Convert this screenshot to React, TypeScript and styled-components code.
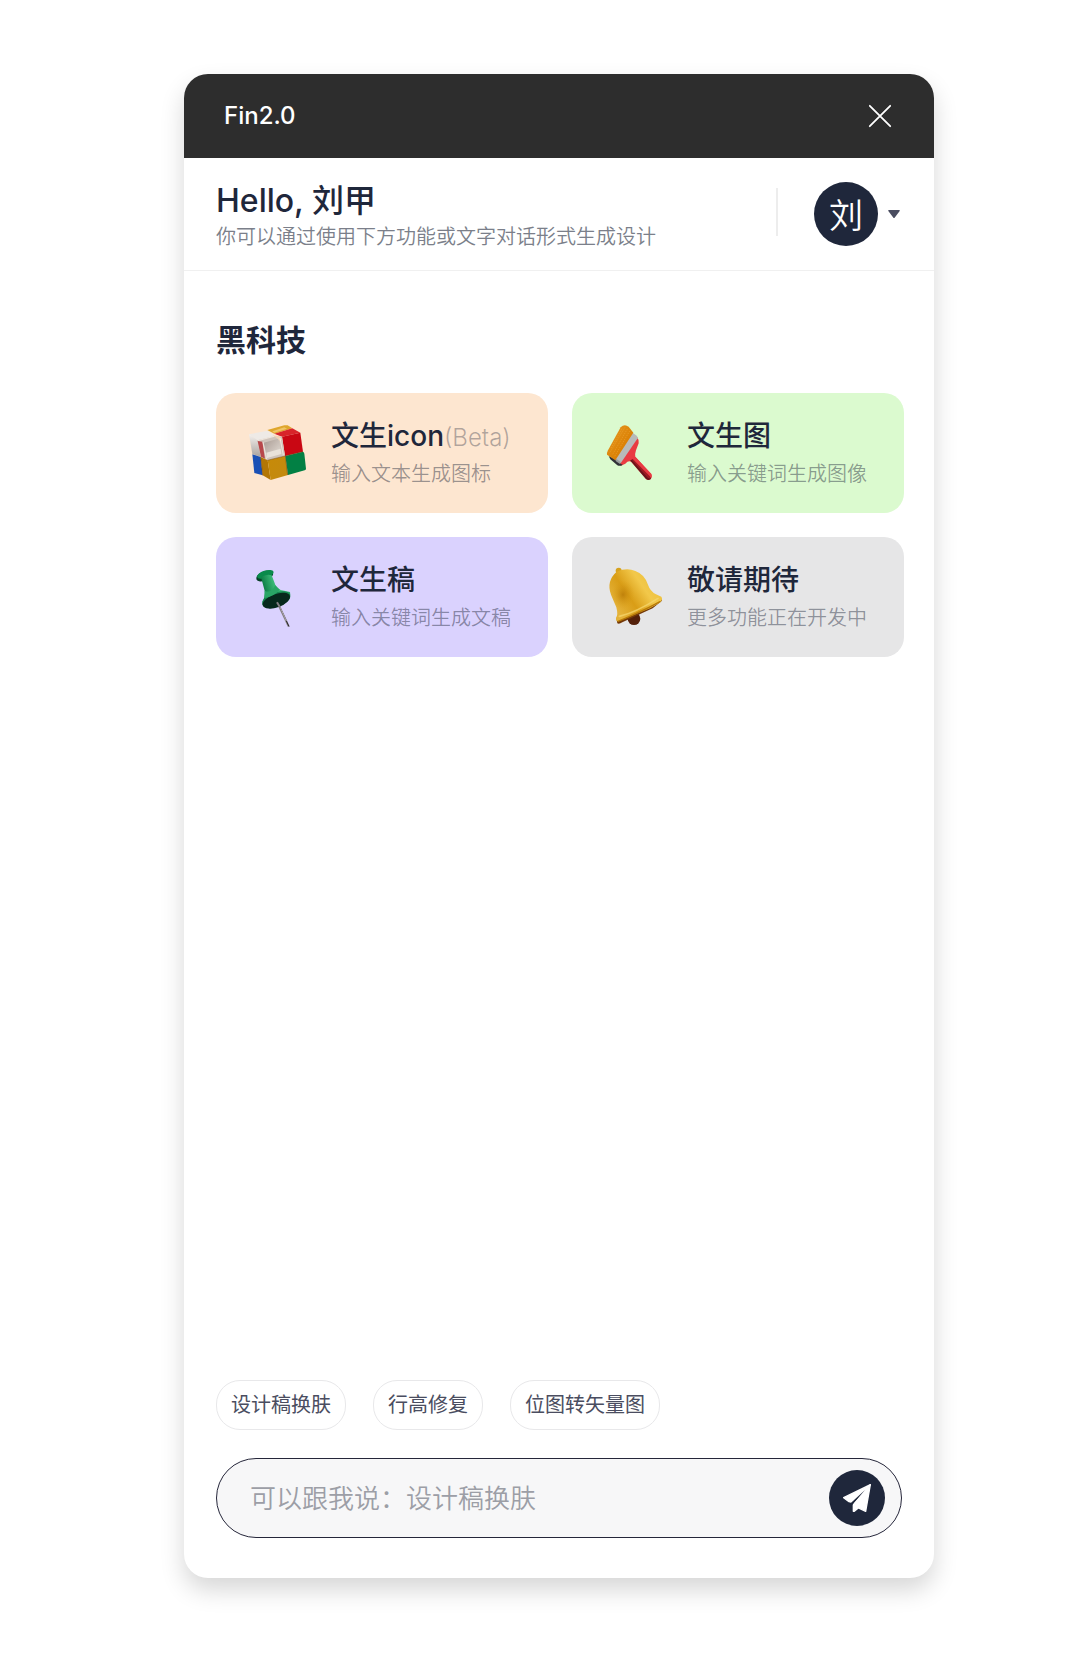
import React, { useState } from "react";
import styled, { createGlobalStyle } from "styled-components";

const ink = "#1f273b";
const fontStack = `Inter, "Noto Sans CJK SC", sans-serif`;

const GlobalStyle = createGlobalStyle`
  *, *::before, *::after { box-sizing: border-box; }
  body { margin: 0; background: #fff; color: ${ink}; font-family: ${fontStack}; }
  button, input { font: inherit; color: inherit; }
  button { margin: 0; padding: 0; border: 0; background: none; cursor: pointer; }
  h1, h2, p { margin: 0; }
`;

const Page = styled.div`
  display: flex;
  min-height: 100vh;
  padding: 74px 154px 92px 184px;
`;

const Panel = styled.main`
  display: flex;
  flex: 1;
  flex-direction: column;
  min-width: 0;
  overflow: hidden;
  border-radius: 24px;
  background: #fff;
  box-shadow: 0 12px 24px rgba(0, 0, 0, 0.16);
`;

const TitleBar = styled.header`
  display: flex;
  align-items: center;
  justify-content: space-between;
  height: 84px;
  padding: 0 38px 0 40px;
  background: #2d2d2d;
  color: #fff;
`;

const AppName = styled.span`
  font-size: 24px;
  font-weight: 500;
  line-height: 32px;
`;

const CloseButton = styled.button`
  display: flex;
  padding: 4px;

  svg {
    display: block;
    width: 24px;
    height: 24px;
  }
`;

const Profile = styled.section`
  display: flex;
  align-items: center;
  justify-content: space-between;
  height: 113px;
  padding: 0 34px 0 32px;
  border-bottom: 1px solid #f0f0f0;
`;

const Welcome = styled.div`
  padding-top: 6px;
`;

const Greeting = styled.h1`
  font-size: 32px;
  font-weight: 500;
  line-height: 40px;
`;

const Subtitle = styled.p`
  color: #7b7f8a;
  font-size: 20px;
  font-weight: 350;
  line-height: 32px;
`;

const Account = styled.div`
  display: flex;
  align-items: center;
  gap: 36px;
`;

const Divider = styled.span`
  width: 2px;
  height: 48px;
  margin-bottom: 4px;
  background: #ededed;
`;

const AccountButton = styled.button`
  display: flex;
  align-items: center;
  gap: 10px;
`;

const Avatar = styled.span`
  display: flex;
  align-items: center;
  justify-content: center;
  width: 64px;
  height: 64px;
  padding-top: 4px;
  border-radius: 50%;
  background: ${ink};
  color: #fff;
  font-size: 34px;
  font-weight: 350;
  line-height: 60px;
`;

const Content = styled.section`
  display: flex;
  flex: 1;
  flex-direction: column;
  padding: 48px 30px 0 32px;
`;

const SectionTitle = styled.h2`
  margin-bottom: 32px;
  font-size: 30px;
  font-weight: 600;
  line-height: 42px;
`;

const FeatureGrid = styled.div`
  display: grid;
  grid-template-columns: repeat(auto-fit, minmax(300px, 1fr));
  gap: 24px;
`;

const FeatureCard = styled.button<{ $tone: string }>`
  display: flex;
  align-items: center;
  gap: 23px;
  height: 120px;
  padding: 0 32px;
  border-radius: 20px;
  background: ${(p) => p.$tone};
  text-align: left;

  svg {
    flex: none;
    width: 60px;
    height: 60px;
  }
`;

const FeatureText = styled.span`
  display: flex;
  flex-direction: column;
  gap: 2px;
  white-space: nowrap;
`;

const FeatureName = styled.span`
  font-size: 28px;
  font-weight: 500;
  line-height: 40px;
`;

const Tag = styled.span`
  color: rgba(31, 39, 59, 0.35);
  font-size: 24px;
  font-weight: 300;
  line-height: 24px;
`;

const FeatureHint = styled.span`
  color: rgba(31, 39, 59, 0.45);
  font-size: 20px;
  font-weight: 350;
  line-height: 32px;
`;

const Composer = styled.footer`
  display: flex;
  flex-direction: column;
  gap: 28px;
  padding: 0 32px 40px;
`;

const ChipList = styled.div`
  display: flex;
  flex-wrap: wrap;
  gap: 27px;
`;

const Chip = styled.button`
  height: 50px;
  padding: 0 14px;
  border: 1px solid #e8e8ea;
  border-radius: 24px;
  background: #fff;
  color: #4a4d60;
  font-size: 20px;
  line-height: 48px;
`;

const PromptForm = styled.form`
  display: flex;
  align-items: center;
  height: 80px;
  padding: 0 16px 0 33px;
  border: 1px solid #25263a;
  border-radius: 40px;
  background: #f7f7f8;
`;

const PromptInput = styled.input`
  flex: 1;
  min-width: 0;
  height: 56px;
  padding: 0;
  border: 0;
  outline: 0;
  background: transparent;
  font-size: 26px;

  &::placeholder {
    color: #9c9ea6;
    font-weight: 350;
    opacity: 1;
  }
`;

const SendButton = styled.button`
  flex: none;
  width: 56px;
  height: 56px;
  border-radius: 50%;
  background: ${ink};

  svg {
    display: block;
  }
`;

const CloseIcon = () => (
  <svg viewBox="0 0 24 24" fill="none" stroke="#fff" strokeWidth="1.8" strokeLinecap="round" aria-hidden="true">
    <path d="M1.8 1.8 22.2 22.2M22.2 1.8 1.8 22.2" />
  </svg>
);

const CaretIcon = () => (
  <svg width="12" height="8" viewBox="0 0 12 8" aria-hidden="true">
    <path d="M.8 0h10.4q1 0 .5.9L6.8 7.4q-.8 1-1.6 0L.3.9Q-.2 0 .8 0Z" fill="#4a4d60" />
  </svg>
);

const PlaneIcon = () => (
  <svg width="56" height="56" viewBox="807 330 168 168" fill="#fff" stroke="#fff" strokeLinejoin="round" aria-hidden="true">
    <path strokeWidth="4" d="M931 374 851 413 867 425 876 427 915 389Z" />
    <path strokeWidth="4" d="M931 374 917 454 895 444 883 454 880 454 880 433 916 391Z" />
    <path d="M870 431 915 390 881 429 878 434Z" fill={ink} stroke="none" />
  </svg>
);

const CubeIcon = () => (
  <svg viewBox="39 39 180 180" aria-hidden="true">
    <defs>
      <linearGradient id="cubeGold" x1="0" y1="0" x2="1" y2="1">
        <stop offset="0" stopColor="#c78a08" />
        <stop offset="1" stopColor="#c28a10" />
      </linearGradient>
      <linearGradient id="cubeWhite" x1="0" y1="0" x2="0" y2="1">
        <stop offset="0" stopColor="#f4f1ee" />
        <stop offset="1" stopColor="#a9a29d" />
      </linearGradient>
      <linearGradient id="cubeInner" x1="0" y1="0" x2="1" y2="1">
        <stop offset="0" stopColor="#a89a92" />
        <stop offset="1" stopColor="#e6dfd8" />
      </linearGradient>
    </defs>
    <path fill="#eeeae6" d="M42 73 98 62 119 78 68 92Z" />
    <path fill="url(#cubeWhite)" d="M42 73 68 91 78 141 52 132Z" />
    <path fill="#dfa62c" d="M97 60 148 46 158 46 172 55 118 71Z" />
    <path fill="#f0c468" d="M112 64 148 52 156 56 118 68Z" />
    <path fill="#d8242a" d="M118 71 172 55 196 68 141 80Z" />
    <path fill="#c90713" d="M141 80 196 68 204 125 150 138Z" />
    <path fill="#cfc4bb" d="M67 91 118 78 141 80 150 138 97 151 78 141Z" />
    <path fill="#b8474a" d="M68 93 82 95 90 146 78 140Z" />
    <path fill="url(#cubeInner)" d="M86 98 130 86 138 130 94 142Z" />
    <path fill="#e9e2da" d="M94 128 137 116 139 132 96 144Z" />
    <path fill="#f0d2b4" d="M112 76 132 79 141 88 136 94 125 84Z" />
    <path fill="none" stroke="#fff6ed" strokeWidth="2" d="M84 96 95 148M135 84 145 136M69 92 118 79" />
    <path fill="#1a50b5" d="M52 133 77 141 83 196 58 189Z" />
    <path fill="#b37605" d="M77 141 98 151 107 210 83 196Z" />
    <path fill="url(#cubeGold)" d="M98 151 151 138 159 195 107 210Z" />
    <path fill="#028044" d="M151 138 204 125Q207 126 208 131L213 176Q213 180 209 181L159 195Z" />
    <path fill="none" stroke="#6f4412" strokeWidth="1.5" d="M97 151 150 138 203 125M77 141 83 196M151 138 158 195" />
  </svg>
);

const BrushIcon = () => (
  <svg viewBox="42 39 180 180" aria-hidden="true">
    <defs>
      <linearGradient id="bristle" x1="0" y1="0" x2="1" y2="1">
        <stop offset="0" stopColor="#e69a26" />
        <stop offset=".6" stopColor="#dc8206" />
        <stop offset="1" stopColor="#c8760a" />
      </linearGradient>
    </defs>
    <path fill="#e93b42" d="M141 80Q147 88 146 100L138 121Q134 133 136 140L184 192Q188 201 182 208 174 213 167 206L124 156Q116 150 106 161L93 167 84 158Z" />
    <path fill="#66151c" d="M120 151 128 149 174 201 184 203Q179 214 168 207Z" />
    <path fill="#9e1720" d="M124 148 132 146 179 195 181 206 174 204Z" />
    <path fill="#e83a43" d="M126 145 137 142 184 192 186 200 178 197Z" />
    <path fill="#303238" d="M56 138 61 148 82 166Q90 170 98 164L92 161 75 146Z" />
    <path fill="#b8bab9" d="M128 68 141 78 143 85 92 160 77 151 73 142Z" />
    <path fill="#989c9c" d="M75 144 92 156 90 162 78 154Z" />
    <path fill="url(#bristle)" d="M92 52Q103 40 116 50L130 68 76 151 51 134Q50 129 54 121Z" />
    <g stroke="#f2ad3d" strokeWidth="2" opacity=".7">
      <path d="m96 56-34 60M105 52 60 127M112 57 68 133M119 63 74 139" strokeDasharray="4 3" />
    </g>
  </svg>
);

const PinIcon = () => (
  <svg viewBox="39 36 180 180" aria-hidden="true">
    <defs>
      <linearGradient id="pinBody" x1="0" y1=".3" x2="1" y2="0">
        <stop offset="0" stopColor="#08763f" />
        <stop offset=".4" stopColor="#39b775" />
        <stop offset=".7" stopColor="#42bd7b" />
        <stop offset="1" stopColor="#118b50" />
      </linearGradient>
    </defs>
    <path d="M128 144 161 214" stroke="#8a8588" strokeWidth="6" />
    <path d="M130 146 162 215" stroke="#2d2a30" strokeWidth="3" />
    <path d="M134 154 154 198" stroke="#eee8ed" strokeWidth="2" />
    <ellipse cx="89" cy="63" rx="27" ry="14" fill="#073f27" transform="rotate(-22 89 63)" />
    <ellipse cx="91" cy="58" rx="26" ry="11" fill="#0a8a4b" transform="rotate(-18 91 58)" />
    <path fill="url(#pinBody)" d="M78 67Q94 56 110 61L118 82Q122 98 137 105L165 111 166 121 82 149Q81 137 87 130 92 122 89 107Z" />
    <ellipse cx="124" cy="134" rx="44" ry="22" fill="#168650" transform="rotate(-20 124 134)" />
    <ellipse cx="124" cy="137" rx="43" ry="20" fill="#06291c" transform="rotate(-20 124 137)" />
    <path fill="#29a565" d="M89 107Q108 117 121 91L134 104Q119 123 87 130Z" />
    <path d="M126 142 134 155" stroke="#857f84" strokeWidth="6" />
  </svg>
);

const BellIcon = () => (
  <svg viewBox="42 36 180 180" aria-hidden="true">
    <defs>
      <linearGradient id="bellBody" x1="1" y1=".1" x2=".1" y2=".7">
        <stop offset="0" stopColor="#eabb32" />
        <stop offset=".4" stopColor="#f2c84a" />
        <stop offset=".7" stopColor="#d99d16" />
        <stop offset="1" stopColor="#e4b23a" />
      </linearGradient>
      <radialGradient id="bellShade">
        <stop offset="0" stopColor="#b87906" stopOpacity=".8" />
        <stop offset="1" stopColor="#d99d16" stopOpacity="0" />
      </radialGradient>
    </defs>
    <circle cx="132" cy="191" r="19" fill="#54200a" />
    <path fill="#743909" d="M79 190 82 205Q87 209 97 202L188 160 216 137 214 131Z" />
    <circle cx="86" cy="47" r="9" fill="#d6a21e" />
    <path fill="url(#bellBody)" d="M80 50Q111 37 136 48 163 58 173 87 181 110 198 118L214 125Q220 134 209 143L180 160 92 196Q77 204 78 188 85 180 79 157L63 119Q48 78 80 50Z" />
    <ellipse cx="99" cy="119" rx="34" ry="43" fill="url(#bellShade)" />
    <path fill="none" stroke="#f6d66d" strokeWidth="5" strokeLinecap="round" opacity=".75" d="M88 184Q138 172 204 130" />
    <path fill="none" stroke="#b77908" strokeWidth="4" strokeLinecap="round" d="M84 199Q145 175 210 140" />
  </svg>
);

const features = [
  { name: "文生icon", tag: "(Beta)", hint: "输入文本生成图标", tone: "#fde6d0", Icon: CubeIcon },
  { name: "文生图", hint: "输入关键词生成图像", tone: "#dbfacf", Icon: BrushIcon },
  { name: "文生稿", hint: "输入关键词生成文稿", tone: "#dad2fe", Icon: PinIcon },
  { name: "敬请期待", hint: "更多功能正在开发中", tone: "#e6e6e7", Icon: BellIcon },
];

const suggestions = ["设计稿换肤", "行高修复", "位图转矢量图"];

export default function App() {
  const [prompt, setPrompt] = useState("");

  return (
    <>
      <GlobalStyle />
      <Page>
        <Panel>
          <TitleBar>
            <AppName>Fin2.0</AppName>
            <CloseButton type="button" aria-label="关闭">
              <CloseIcon />
            </CloseButton>
          </TitleBar>
          <Profile>
            <Welcome>
              <Greeting>Hello, 刘甲</Greeting>
              <Subtitle>你可以通过使用下方功能或文字对话形式生成设计</Subtitle>
            </Welcome>
            <Account>
              <Divider />
              <AccountButton type="button">
                <Avatar>刘</Avatar>
                <CaretIcon />
              </AccountButton>
            </Account>
          </Profile>
          <Content>
            <SectionTitle>黑科技</SectionTitle>
            <FeatureGrid>
              {features.map(({ name, tag, hint, tone, Icon }) => (
                <FeatureCard key={name} type="button" $tone={tone}>
                  <Icon />
                  <FeatureText>
                    <FeatureName>
                      {name}
                      {tag && <Tag>{tag}</Tag>}
                    </FeatureName>
                    <FeatureHint>{hint}</FeatureHint>
                  </FeatureText>
                </FeatureCard>
              ))}
            </FeatureGrid>
          </Content>
          <Composer>
            <ChipList>
              {suggestions.map((text) => (
                <Chip key={text} type="button" onClick={() => setPrompt(text)}>
                  {text}
                </Chip>
              ))}
            </ChipList>
            <PromptForm onSubmit={(e) => e.preventDefault()}>
              <PromptInput
                type="text"
                aria-label="输入指令"
                placeholder="可以跟我说：设计稿换肤"
                value={prompt}
                onChange={(e) => setPrompt(e.target.value)}
              />
              <SendButton type="submit" aria-label="发送">
                <PlaneIcon />
              </SendButton>
            </PromptForm>
          </Composer>
        </Panel>
      </Page>
    </>
  );
}
